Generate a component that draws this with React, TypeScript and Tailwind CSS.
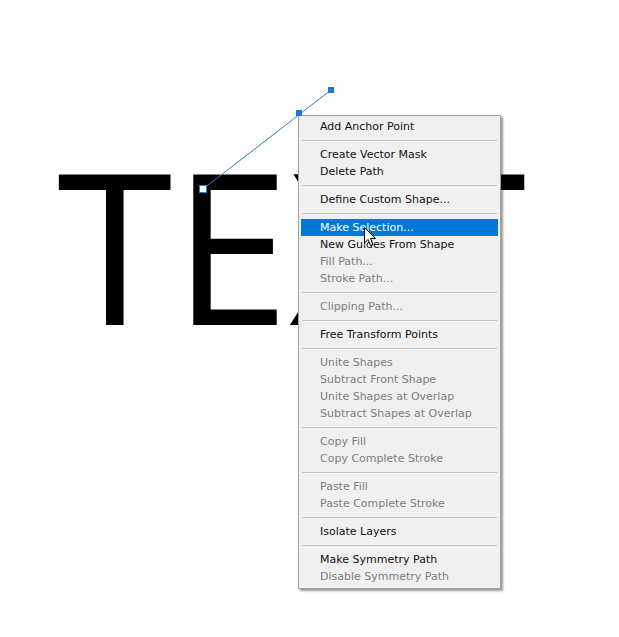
import React from 'react';

type Item = { label: string; disabled?: boolean; active?: boolean } | 'sep';

const items: Item[] = [
  { label: 'Add Anchor Point' },
  'sep',
  { label: 'Create Vector Mask' },
  { label: 'Delete Path' },
  'sep',
  { label: 'Define Custom Shape...' },
  'sep',
  { label: 'Make Selection...', active: true },
  { label: 'New Guides From Shape' },
  { label: 'Fill Path...', disabled: true },
  { label: 'Stroke Path...', disabled: true },
  'sep',
  { label: 'Clipping Path...', disabled: true },
  'sep',
  { label: 'Free Transform Points' },
  'sep',
  { label: 'Unite Shapes', disabled: true },
  { label: 'Subtract Front Shape', disabled: true },
  { label: 'Unite Shapes at Overlap', disabled: true },
  { label: 'Subtract Shapes at Overlap', disabled: true },
  'sep',
  { label: 'Copy Fill', disabled: true },
  { label: 'Copy Complete Stroke', disabled: true },
  'sep',
  { label: 'Paste Fill', disabled: true },
  { label: 'Paste Complete Stroke', disabled: true },
  'sep',
  { label: 'Isolate Layers' },
  'sep',
  { label: 'Make Symmetry Path' },
  { label: 'Disable Symmetry Path', disabled: true },
];

function ContextMenu() {
  return (
    <div className="absolute left-[298px] top-[115px] w-[203px] border border-[#a0a0a0] bg-[#f0f0f0] px-[2px] pt-[2px] pb-[3px] shadow-[2px_2px_2px_rgba(0,0,0,0.4)] font-['DejaVu_Sans',sans-serif] text-[11px]">
      {items.map((item, i) =>
        item === 'sep' ? (
          <div key={i} className="h-[11px] flex items-center px-px">
            <div className="h-px w-full bg-[#c4c4c4]" />
          </div>
        ) : (
          <div
            key={i}
            className={
              'h-[17px] pl-[19px] whitespace-nowrap ' +
              (item.active
                ? 'bg-[#0078d7] text-white'
                : item.disabled
                ? 'text-[#7d7d7d]'
                : 'text-[#111]')
            }
          >
            <span className="block leading-[13px] pt-[2px]">{item.label}</span>
          </div>
        )
      )}
    </div>
  );
}

export default function App() {
  return (
    <div className="relative w-[619px] h-[637px] bg-white overflow-hidden">
      {/* document text layer */}
      <div className="absolute left-[57px] top-[139px] text-[210px] leading-none text-black font-['Open_Sans',sans-serif] whitespace-nowrap">
        TEXT
      </div>

      <ContextMenu />

      {/* path + handles */}
      <svg className="absolute inset-0 pointer-events-none" width="619" height="637">
        <line x1="203" y1="189" x2="331" y2="90" stroke="#2a7fd4" strokeWidth="1" />
        <rect x="296" y="110" width="6" height="6" fill="#1f78d6" />
        <rect x="328" y="87" width="6" height="6" fill="#1f78d6" />
        <rect x="199.5" y="185.5" width="7" height="7" fill="#fff" stroke="#2a7fd4" strokeWidth="1" />
      </svg>

      {/* mouse cursor */}
      <svg className="absolute left-[364px] top-[227px] pointer-events-none" width="13" height="20" viewBox="0 0 13 20">
        <path d="M0.5 0.5 L0.5 16 L4 12.5 L6.5 18.5 L9 17.5 L6.5 11.5 L11.5 11.5 Z" fill="#fff" stroke="#000" strokeWidth="1" strokeLinejoin="miter" />
      </svg>
    </div>
  );
}
